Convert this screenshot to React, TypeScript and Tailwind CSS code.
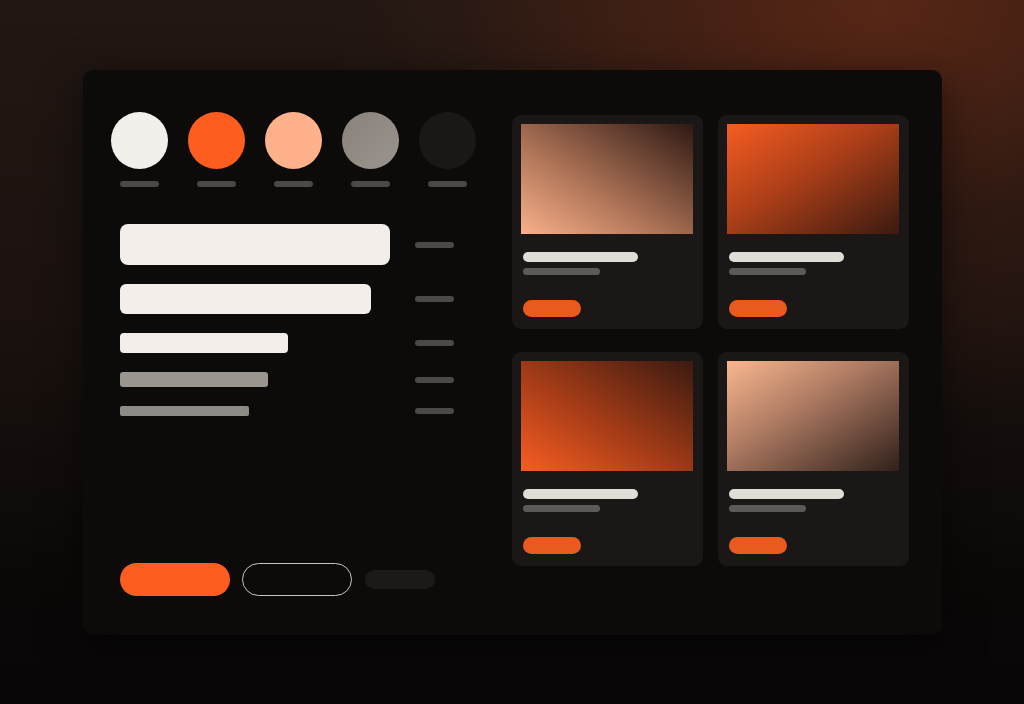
import React from "react";

const swatches = [
  "bg-[#f3efea]",
  "bg-[#ff5c1f]",
  "bg-[#ffb18b]",
  "bg-[linear-gradient(135deg,#8a827b,#9a948e)]",
  "bg-[#1a1817]",
];

// bar rows: bar width / height / colour / radius
const bars = [
  { cls: "w-[270px] h-[41px] bg-[#f3eee9] rounded-[8px]" },
  { cls: "w-[251px] h-[30px] bg-[#f3eee9] rounded-[6px]" },
  { cls: "w-[168px] h-[20px] bg-[#f3eee9] rounded-[4px]" },
  { cls: "w-[148px] h-[15px] bg-[#9a958f] rounded-[3px]" },
  { cls: "w-[129px] h-[10px] bg-[#8f8b87] rounded-[2px]" },
];

const cards = [
  "bg-[linear-gradient(to_top_right,#f9b08a_0%,#b07558_40%,#2e1913_100%)]",
  "bg-[linear-gradient(to_bottom_right,#f65c22_0%,#ad3f18_45%,#3a1a10_100%)]",
  "bg-[linear-gradient(to_top_right,#f85d22_0%,#a63c17_45%,#3b1a10_100%)]",
  "bg-[linear-gradient(to_bottom_right,#f9b78e_0%,#ad7a62_42%,#30201a_100%)]",
];

function Card({ image }: { image: string }) {
  return (
    <div className="w-[191px] h-[214px] rounded-[9px] bg-[#1a1716] px-[9px] pt-[9px] flex flex-col">
      <div className={`w-[172px] h-[110px] ${image}`} />
      <div className="ml-[2px] mt-[18px] w-[115px] h-[10px] rounded-full bg-[#e0dcd6]" />
      <div className="ml-[2px] mt-[6px] w-[77px] h-[7px] rounded-full bg-[#5c5957]" />
      <div className="ml-[2px] mt-[25px] w-[58px] h-[17px] rounded-full bg-[#e85a20]" />
    </div>
  );
}

export default function App() {
  return (
    <div className="w-full h-[704px] overflow-hidden pt-[70px] pl-[83px] bg-[radial-gradient(ellipse_560px_420px_at_86%_0%,#62291699_0%,#55251566_40%,transparent_100%),radial-gradient(ellipse_420px_200px_at_86%_2%,#6a2c1680_0%,transparent_100%),linear-gradient(to_bottom,#211713_0%,#1b120f_45%,#0b0908_80%,#080606_100%)]">
      <div className="w-[859px] h-[565px] rounded-[10px] bg-[#0d0b0a] shadow-[0_10px_40px_rgba(0,0,0,0.5)] flex pl-[28px] pr-[34px] pt-[42px] pb-[39px]">
        {/* left column */}
        <div className="w-[365px] flex flex-col">
          <div className="flex gap-[20px]">
            {swatches.map((s, i) => (
              <div key={i} className="flex flex-col items-center w-[57px]">
                <div className={`w-[57px] h-[57px] rounded-full ${s}`} />
                <div className="mt-[12px] w-[39px] h-[6px] rounded-full bg-[#4b4846]" />
              </div>
            ))}
          </div>

          <div className="mt-[37px] pl-[9px] w-[343px] flex flex-col gap-[19px]">
            {bars.map((b, i) => (
              <div key={i} className="flex items-center justify-between">
                <div className={b.cls} />
                <div className="w-[39px] h-[6px] rounded-full bg-[#4b4846]" />
              </div>
            ))}
          </div>

          <div className="mt-auto pl-[9px] flex items-center gap-[12px]">
            <div className="w-[110px] h-[33px] rounded-full bg-[#ff5c1f]" />
            <div className="w-[110px] h-[33px] rounded-full border border-[#c9c6c2]" />
            <div className="w-[70px] h-[19px] rounded-full bg-[#1c1918] ml-[1px]" />
          </div>
        </div>

        {/* cards */}
        <div className="ml-[36px] mt-[3px] grid grid-cols-2 gap-x-[15px] gap-y-[23px] h-fit">
          {cards.map((c, i) => (
            <Card key={i} image={c} />
          ))}
        </div>
      </div>
    </div>
  );
}
